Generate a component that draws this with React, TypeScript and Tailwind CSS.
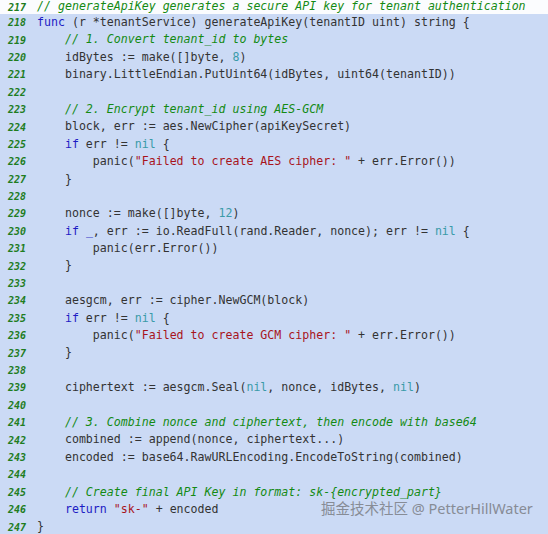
import React from 'react';

type Tok = [string, string];

// t = plain text, k = keyword, c = comment, n = number/nil, s = string
const lines: { no: number; toks: Tok[] }[] = [
  { no: 217, toks: [['c', '// generateApiKey generates a secure API key for tenant authentication']] },
  { no: 218, toks: [['k', 'func'], ['t', ' (r *tenantService) generateApiKey(tenantID uint) string {']] },
  { no: 219, toks: [['t', '    '], ['c', '// 1. Convert tenant_id to bytes']] },
  { no: 220, toks: [['t', '    idBytes := make([]byte, '], ['n', '8'], ['t', ')']] },
  { no: 221, toks: [['t', '    binary.LittleEndian.PutUint64(idBytes, uint64(tenantID))']] },
  { no: 222, toks: [] },
  { no: 223, toks: [['t', '    '], ['c', '// 2. Encrypt tenant_id using AES-GCM']] },
  { no: 224, toks: [['t', '    block, err := aes.NewCipher(apiKeySecret)']] },
  { no: 225, toks: [['t', '    '], ['k', 'if'], ['t', ' err != '], ['n', 'nil'], ['t', ' {']] },
  { no: 226, toks: [['t', '        panic('], ['s', '"Failed to create AES cipher: "'], ['t', ' + err.Error())']] },
  { no: 227, toks: [['t', '    }']] },
  { no: 228, toks: [] },
  { no: 229, toks: [['t', '    nonce := make([]byte, '], ['n', '12'], ['t', ')']] },
  { no: 230, toks: [['t', '    '], ['k', 'if'], ['t', ' '], ['k', '_'], ['t', ', err := io.ReadFull(rand.Reader, nonce); err != '], ['n', 'nil'], ['t', ' {']] },
  { no: 231, toks: [['t', '        panic(err.Error())']] },
  { no: 232, toks: [['t', '    }']] },
  { no: 233, toks: [] },
  { no: 234, toks: [['t', '    aesgcm, err := cipher.NewGCM(block)']] },
  { no: 235, toks: [['t', '    '], ['k', 'if'], ['t', ' err != '], ['n', 'nil'], ['t', ' {']] },
  { no: 236, toks: [['t', '        panic('], ['s', '"Failed to create GCM cipher: "'], ['t', ' + err.Error())']] },
  { no: 237, toks: [['t', '    }']] },
  { no: 238, toks: [] },
  { no: 239, toks: [['t', '    ciphertext := aesgcm.Seal('], ['n', 'nil'], ['t', ', nonce, idBytes, '], ['n', 'nil'], ['t', ')']] },
  { no: 240, toks: [] },
  { no: 241, toks: [['t', '    '], ['c', '// 3. Combine nonce and ciphertext, then encode with base64']] },
  { no: 242, toks: [['t', '    combined := append(nonce, ciphertext...)']] },
  { no: 243, toks: [['t', '    encoded := base64.RawURLEncoding.EncodeToString(combined)']] },
  { no: 244, toks: [] },
  { no: 245, toks: [['t', '    '], ['c', '// Create final API Key in format: sk-{encrypted_part}']] },
  { no: 246, toks: [['t', '    '], ['k', 'return'], ['t', ' '], ['s', '"sk-"'], ['t', ' + encoded']] },
  { no: 247, toks: [['t', '}']] },
];

const tokClass: Record<string, string> = {
  t: 'text-[#333333]',
  k: 'text-[#1c1cc4]',
  c: 'text-[#138a13] italic',
  n: 'text-[#3a9aa8]',
  s: 'text-[#a8141c]',
};

export default function App() {
  return (
    <div className="relative w-[548px] h-[534px] overflow-hidden bg-[#cbdaf5] font-['DejaVu_Sans_Mono',monospace]">
      <div className="flex flex-col">
        {lines.map(line => (
          <div
            key={line.no}
            className={`flex items-center ${line.no === 217 ? 'h-[14px] bg-[#fbfcfe]' : 'h-[17.4px]'}`}
          >
            <span className="w-[37px] shrink-0 pl-[8px] text-[10px] font-bold italic text-[#1f7d1f]">
              {line.no}
            </span>
            <span className="whitespace-pre text-[11.6px]">
              {line.toks.map((t, i) => (
                <span key={i} className={tokClass[t[0]]}>{t[1]}</span>
              ))}
            </span>
          </div>
        ))}
      </div>
      {/* watermark */}
      <div className="absolute left-[321px] top-[498px] whitespace-nowrap text-[14.5px] text-[#878c96] font-['Noto_Sans','Noto_Sans_CJK_SC',sans-serif]">
        掘金技术社区 @ PetterHillWater
      </div>
    </div>
  );
}
